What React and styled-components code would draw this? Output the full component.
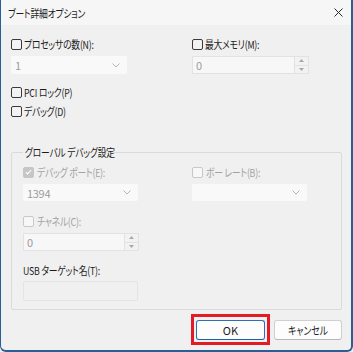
import React from "react";
import styled, { createGlobalStyle } from "styled-components";

const GlobalStyle = createGlobalStyle`
  html, body {
    margin: 0;
    padding: 0;
    background: #f0f0f0;
  }
  * {
    box-sizing: border-box;
  }
`;

const Window = styled.div`
  width: 353px;
  height: 352px;
  display: flex;
  flex-direction: column;
  background: #f0f0f0;
  border-left: 1px solid #2a5f96;
  border-right: 2px solid #2a5f96;
  border-bottom: 2px solid #2a5f96;
  border-bottom-left-radius: 6px;
  border-bottom-right-radius: 6px;
  font-family: "Noto Sans CJK JP", "Noto Sans", sans-serif;
  font-size: 11px;
  font-feature-settings: "palt";
  letter-spacing: -0.3px;
  color: #1b1b1b;
  overflow: hidden;
`;

// Yu Gothic UI kana are much narrower than Noto's, so squeeze the text
const Text = styled.span`
  display: inline-block;
  white-space: nowrap;
  transform: scaleX(${(p) => p.$scale || 0.8});
  transform-origin: ${(p) => (p.$center ? "center" : "left")} center;
`;

const TitleBar = styled.div`
  height: 25px;
  flex: none;
  display: flex;
  align-items: center;
  justify-content: space-between;
  padding: 0 8px 0 7px;
  background: #f6f6f6;
  font-size: 11px;
`;

const Content = styled.div`
  flex: 1;
  display: flex;
  flex-direction: column;
  padding: 11px 9px 0 10px;
`;

const Grid = styled.div`
  display: grid;
  grid-template-columns: ${(p) => p.$left}px 1fr;
`;

const Field = styled.div`
  display: flex;
  flex-direction: column;
  gap: ${(p) => p.$gap ?? 4}px;
`;

const CheckRow = styled.label`
  height: 16px;
  display: flex;
  align-items: center;
  gap: ${(p) => (p.$disabled ? 3 : 2)}px;
  margin-top: ${(p) => p.$top || 0}px;
  color: ${(p) => (p.$disabled ? "#a2a2a2" : "#1b1b1b")};
  white-space: nowrap;
`;

const Box = styled.span`
  width: 11px;
  height: 11px;
  flex: none;
  border-radius: 2px;
  display: flex;
  align-items: center;
  justify-content: center;
  border: 1px solid
    ${(p) => (p.$checked ? "#c6c6c6" : p.$disabled ? "#c8c8c8" : "#3a3a3a")};
  background: ${(p) =>
    p.$checked ? "#c6c6c6" : p.$disabled ? "#f7f7f7" : "#f3f3f3"};
`;

const Select = styled.div`
  width: ${(p) => p.$w}px;
  height: ${(p) => p.$h || 18}px;
  display: flex;
  align-items: center;
  justify-content: space-between;
  padding: 0 7px 0 4px;
  background: #f9f9f9;
  border-radius: 2px;
  color: #9c9c9c;
`;

const Spin = styled.div`
  width: ${(p) => p.$w}px;
  height: 18px;
  display: flex;
  background: #f7f7f7;
  border: 1px solid #e2e2e2;
  color: #9c9c9c;
`;

const SpinValue = styled.div`
  flex: 1;
  display: flex;
  align-items: center;
  padding-left: 3px;
`;

const SpinButtons = styled.div`
  width: 14px;
  display: flex;
  flex-direction: column;
  border-left: 1px solid #e2e2e2;
`;

const SpinButton = styled.div`
  flex: 1;
  display: flex;
  align-items: center;
  justify-content: center;
  background: #f2f2f2;
  border-bottom: ${(p) => (p.$top ? "1px solid #e2e2e2" : "none")};
`;

const TextBox = styled.div`
  width: 115px;
  height: 20px;
  border: 1px solid #e4e4e4;
  background: #f0f0f0;
  border-radius: 2px;
`;

const PlainLabel = styled.div`
  height: 16px;
  display: flex;
  align-items: center;
  margin-top: ${(p) => p.$top || 0}px;
`;

const Group = styled.fieldset`
  margin: 25px 0 0 0;
  padding: 4px 10px 8px 11px;
  border: 1px solid #dadada;
  border-radius: 2px;
  min-width: 0;
`;

const Legend = styled.legend`
  width: 90px;
  padding: 0 2px;
  margin-left: 0;
  line-height: 16px;
  font-size: 11px;
`;

const Footer = styled.div`
  display: flex;
  justify-content: flex-end;
  align-items: flex-start;
  margin-top: 4px;
`;

const Highlight = styled.span`
  display: inline-flex;
  border: 3px solid #e21b24;
  padding: 3px 2px 2px 2px;
`;

const Button = styled.button`
  width: ${(p) => p.$w}px;
  height: 20px;
  margin: ${(p) => (p.$default ? 0 : "6px 0 0 4px")};
  padding: 0;
  border-radius: 3px;
  font: inherit;
  font-size: 11px;
  color: #1b1b1b;
  background: #fdfdfd;
  border: 1px solid ${(p) => (p.$default ? "#2a6fb8" : "#d0d0d0")};
  border-bottom-color: ${(p) => (p.$default ? "#1f5fa8" : "#b8b8b8")};
`;

const Chevron = () => (
  <svg width="8" height="5" viewBox="0 0 8 5">
    <path d="M0.5 0.5 L4 4 L7.5 0.5" fill="none" stroke="#b4b4b4" strokeWidth="1" />
  </svg>
);

const Tri = ({ up }) => (
  <svg width="5" height="3" viewBox="0 0 5 3">
    <path d={up ? "M0 3 L2.5 0 L5 3 Z" : "M0 0 L2.5 3 L5 0 Z"} fill="#a8a8a8" />
  </svg>
);

const Check = ({ checked, disabled, children, top }) => (
  <CheckRow $disabled={disabled} $top={top}>
    <Box $checked={checked} $disabled={disabled}>
      {checked && (
        <svg width="7" height="6" viewBox="0 0 7 6">
          <path d="M0.8 3.2 L2.6 4.9 L6.2 1" fill="none" stroke="#fff" strokeWidth="1.1" />
        </svg>
      )}
    </Box>
    <Text>{children}</Text>
  </CheckRow>
);

const SpinBox = ({ w, value }) => (
  <Spin $w={w}>
    <SpinValue>{value}</SpinValue>
    <SpinButtons>
      <SpinButton $top>
        <Tri up />
      </SpinButton>
      <SpinButton>
        <Tri />
      </SpinButton>
    </SpinButtons>
  </Spin>
);

export default function App() {
  return (
    <>
      <GlobalStyle />
      <Window>
        <TitleBar>
          <Text>ブート詳細オプション</Text>
          <svg width="9" height="9" viewBox="0 0 9 9">
            <path d="M0.5 0.5 L8.5 8.5 M8.5 0.5 L0.5 8.5" stroke="#2b2b2b" strokeWidth="1" />
          </svg>
        </TitleBar>
        <Content>
          <Grid $left={181}>
            <Field>
              <Check>プロセッサの数(N):</Check>
              <Select $w={116}>
                <span>1</span>
                <Chevron />
              </Select>
            </Field>
            <Field>
              <Check>最大メモリ(M):</Check>
              <SpinBox w={117} value="0" />
            </Field>
          </Grid>
          <Check top={10}>PCI ロック(P)</Check>
          <Check top={3}>デバッグ(D)</Check>
          <Group>
            <Legend>
              <Text>グローバル デバッグ設定</Text>
            </Legend>
            <Grid $left={169}>
              <Field>
                <Check checked disabled>デバッグ ポート(E):</Check>
                <Select $w={115} $h={17}>
                  <span>1394</span>
                  <Chevron />
                </Select>
              </Field>
              <Field>
                <Check disabled>ボー レート(B):</Check>
                <Select $w={115} $h={17}>
                  <span />
                  <Chevron />
                </Select>
              </Field>
            </Grid>
            <Field>
              <Check disabled top={12}>チャネル(C):</Check>
              <SpinBox w={116} value="0" />
            </Field>
            <Field $gap={3}>
              <PlainLabel $top={11}>
                <Text>USB ターゲット名(T):</Text>
              </PlainLabel>
              <TextBox />
            </Field>
          </Group>
          <Footer>
            <Highlight>
              <Button $default $w={69}>OK</Button>
            </Highlight>
            <Button $w={68}>
              <Text $center>キャンセル</Text>
            </Button>
          </Footer>
        </Content>
      </Window>
    </>
  );
}
